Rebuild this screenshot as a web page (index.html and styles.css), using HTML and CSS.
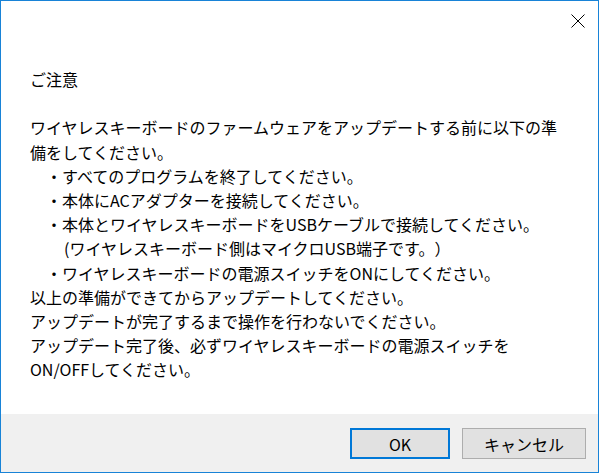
FILE: index.html
```html
<!DOCTYPE html>
<html lang="ja">
<head>
    <meta charset="UTF-8">
    <title>ご注意</title>
    <link rel="stylesheet" href="styles.css">
</head>
<body>
    <div class="window">
        <div class="titlebar">
            <button class="close" aria-label="閉じる">
                <svg width="14" height="14" viewBox="0 0 14 14">
                    <path d="M0.5 0.5 L13.5 13.5 M13.5 0.5 L0.5 13.5" stroke="#000" stroke-width="1" fill="none"/>
                </svg>
            </button>
        </div>

        <div class="content">
            <p>ご注意</p>
            <p>&nbsp;</p>
            <p>ワイヤレスキーボードのファームウェアをアップデートする前に以下の準</p>
            <p>備をしてください。</p>
            <p class="item">・すべてのプログラムを終了してください。</p>
            <p class="item">・本体にACアダプターを接続してください。</p>
            <p class="item">・本体とワイヤレスキーボードをUSBケーブルで接続してください。</p>
            <p class="sub">(ワイヤレスキーボード側はマイクロUSB端子です。）</p>
            <p class="item">・ワイヤレスキーボードの電源スイッチをONにしてください。</p>
            <p>以上の準備ができてからアップデートしてください。</p>
            <p>アップデートが完了するまで操作を行わないでください。</p>
            <p>アップデート完了後、必ずワイヤレスキーボードの電源スイッチを</p>
            <p>ON/OFFしてください。</p>
        </div>

        <div class="footer">
            <button class="btn btn-default">OK</button>
            <button class="btn btn-cancel">キャンセル</button>
        </div>
    </div>
</body>
</html>
```

FILE: styles.css
```css
body {
    margin: 0;
    padding: 0;
    background-color: #fff;
    font-family: "Noto Sans CJK JP", "Noto Sans", sans-serif;
    color: #000;
}
.window {
    width: 599px;
    height: 473px;
    box-sizing: border-box;
    border: 1px solid #1883d7;
    display: flex;
    flex-direction: column;
    background: white;
}
.titlebar {
    height: 40px;
    display: flex;
    justify-content: flex-end;
    align-items: center;
    padding-right: 13px;
}
.close {
    width: 14px;
    height: 14px;
    padding: 0;
    border: none;
    background: none;
    display: flex;
}
.content {
    flex: 1;
    padding: 26px 0 0 29px;
    font-size: 16px;
    line-height: 24.2px;
    text-spacing-trim: space-all;
}
.content p {
    margin: 0;
    white-space: nowrap;
}
.content .item {
    padding-left: 16px;
}
.content .sub {
    padding-left: 34px;
}
.footer {
    height: 58px;
    background-color: #f0f0f0;
    display: flex;
    justify-content: flex-end;
    gap: 12px;
    padding: 14px 12px 0 0;
    box-sizing: border-box;
}
.btn {
    height: 31px;
    box-sizing: border-box;
    background-color: #e1e1e1;
    border: 1px solid #adadad;
    font-family: "Noto Sans CJK JP", "Noto Sans", sans-serif;
    font-size: 16px;
    color: #000;
    padding: 0;
}
.btn-default {
    width: 100px;
    border: 2px solid #0078d7;
}
.btn-cancel {
    width: 124px;
}
```
